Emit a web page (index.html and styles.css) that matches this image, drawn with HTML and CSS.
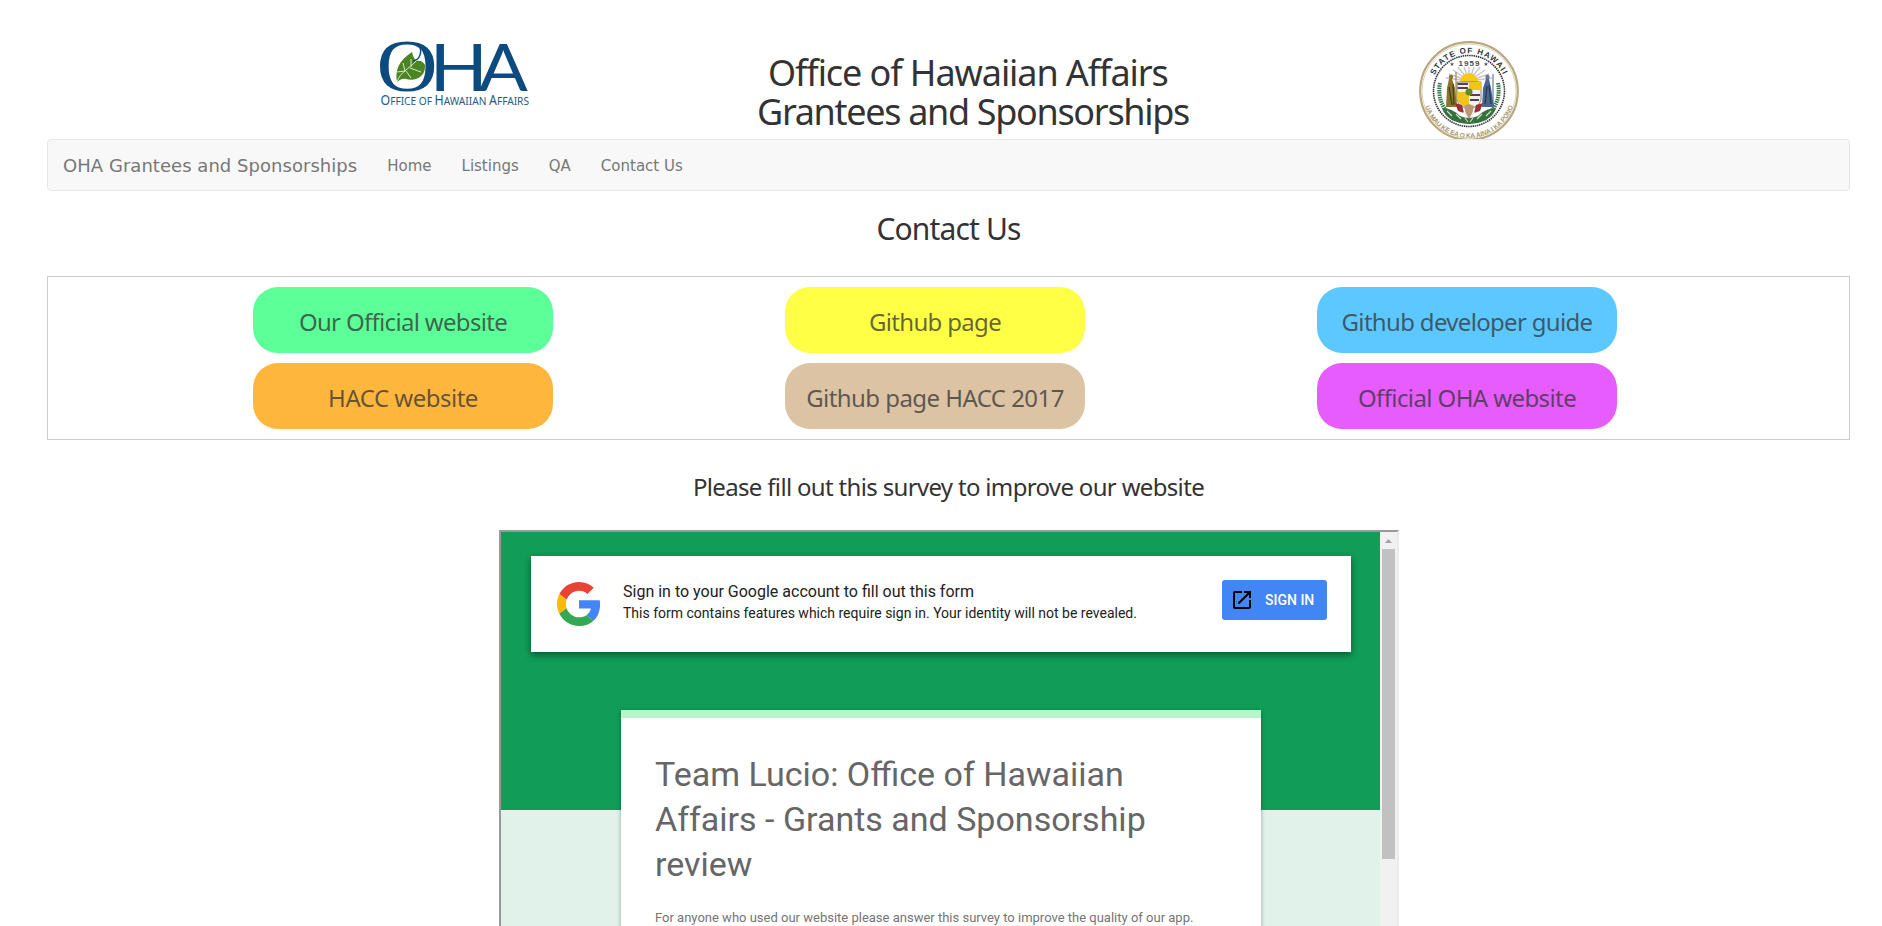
FILE: index.html
```html
<!DOCTYPE html>
<html lang="en">
<head>
<meta charset="utf-8">
<title>Contact Us</title>
<link rel="stylesheet" href="styles.css">
</head>
<body>
<div class="page">
  <header class="masthead">
    <svg class="oha" width="160" height="76" viewBox="375 36 160 76">
      <g fill="#0d4a7f">
        <text class="serif" transform="translate(376.500 91) scale(1.160 1)" font-size="73">O</text>
        <text class="lato" transform="translate(429.500 91.300) scale(1.160 1)" font-size="66">H</text>
        <text class="lato" transform="translate(478.800 91.300) scale(1.100 1)" font-size="66">A</text>
      </g>
      <path d="M397 82C395 71 398 61 412 52C413 56 414 58 416 61C420 60 423 61 425 65C426 76 416 82 406 79C402 78 400 80 397 82Z" fill="#4b8523"/>
      <path d="M413 61C419 60 422 54 420 47" fill="none" stroke="#0d4a7f" stroke-width="1.500"/>
      <path d="M397 82C400 72 409 69 416 61M405 71L403 63M405 71L397 72M410 68L421 72M406 71L411 78M411 67L411 59" fill="none" stroke="#e6efda" stroke-width=".9"/>
      <text class="noto" x="380.500" y="105" fill="#275b8c" textLength="148.500" lengthAdjust="spacingAndGlyphs"><tspan font-size="14">O</tspan><tspan font-size="11.500">FFICE OF </tspan><tspan font-size="14">H</tspan><tspan font-size="11.500">AWAIIAN </tspan><tspan font-size="14">A</tspan><tspan font-size="11.500">FFAIRS</tspan></text>
    </svg>
    <h1 class="title"><span class="t1">Office of Hawaiian Affairs</span><span class="t2">Grantees and Sponsorships</span></h1>
    <svg class="seal" width="102" height="99" viewBox="-51 -51 102 99">
      <defs>
        <path id="arc-top" d="M-37.800 0A37.800 37.800 0 0 1 37.800 0"/>
        <path id="arc-bottom" d="M-46.300 -4A46.500 46.500 0 1 0 46.300 -4"/>
      </defs>
      <circle r="48.800" fill="#fff" stroke="#b9a77d" stroke-width="2.200"/>
      <circle r="47" fill="none" stroke="#ded4b8" stroke-width="1"/>
      <circle r="35.500" fill="none" stroke="#34343c" stroke-width="1.600" stroke-dasharray="1.500 .7"/>
      <text class="seal-top" text-anchor="middle"><textPath href="#arc-top" startOffset="50%">STATE OF HAWAII</textPath></text>
      <text class="seal-bottom" text-anchor="middle"><textPath href="#arc-bottom" startOffset="50%">UA MAU KE EA O KA AINA I KA PONO</textPath></text>
      <text class="seal-year" x="-10.500" y="-25" textLength="21">1959</text>
      <path d="M-17 -29l.6 1.500h1.500l-1.200 1 .5 1.500-1.400-.9-1.400.9.500-1.500-1.200-1h1.500zM17 -29l.6 1.500h1.500l-1.200 1 .5 1.500-1.400-.9-1.400.9.500-1.500-1.200-1h1.500z" fill="#555"/>
      <path d="M0-10L-20-17M0-10L-16-21M0-10L-11-24M0-10L-5-24M0-10L0-24M0-10L5-24M0-10L11-24M0-10L16-21M0-10L20-17M0-10L-23-13M0-10L23-13" stroke="#c4c6d2" stroke-width="1.400"/>
      <path d="M-9-9A9 9 0 0 1 9-9Z" fill="#f7c913"/>
      <path d="M-29-8Q-33 13-15 28M29-8Q33 13 15 28" fill="none" stroke="#397649" stroke-width="4" stroke-dasharray="1.500 .8"/>
      <path d="M-27 17Q-17 17-9 25Q0 29 9 25Q17 17 27 17Q22 32 0 33Q-22 32-27 17Z" fill="#35703f"/>
      <path d="M-22 20l5 5M-13 23l5 5M13 23l-5 5M22 20l-5 5M-4 27l3 4M4 27l-3 4" stroke="#cfddc9" stroke-width="1.200"/>
      <path d="M-12-9H12V9Q10 16 0 18Q-10 16-12 9Z" fill="#f2f0e8" stroke="#666" stroke-width=".8"/>
      <path d="M0-9H12V-1H0ZM-12 1H0V17Q-9 15-12 8Z" fill="#f0c419"/>
      <path d="M-11.500-7H-1M-11.500-3H-1M1 4H11M1 9H10" stroke="#544057" stroke-width="2"/>
      <circle r="3.500" cy="1" fill="#608a23"/>
      <path d="M-20-12h3l3 9 2 19h-11l1-19z" fill="#8a762b"/>
      <path d="M-20-4l3 18M-16-7l1 21" stroke="#4b3d24" stroke-width="1.300"/>
      <path d="M-13-19V16" stroke="#8a762b" stroke-width="1"/>
      <circle cx="-18" cy="-14" r="2.200" fill="#8f7430"/>
      <path d="M17-12h3l2 9 3 19H13l1-19z" fill="#48658e"/>
      <path d="M18-5l-2 18M20-6l2 19" stroke="#29394e" stroke-width="1.300"/>
      <path d="M24-17V14" stroke="#48658e" stroke-width="1"/>
      <circle cx="18.500" cy="-14" r="2.200" fill="#6d7890"/>
      <path d="M-14 12l7 2 2 8-6-2zM14 12l-7 2-2 8 6-2z" fill="#99313a"/>
      <path d="M-5 15L0 13L5 15L3 24L0 28L-3 24Z" fill="#b99979"/>
      <path d="M-5 21l3 5M5 21l-3 5" stroke="#f4ede0" stroke-width="2"/>
    </svg>
  </header>

  <nav class="navbar">
    <a class="brand">OHA Grantees and Sponsorships</a>
    <a class="link">Home</a><a class="link">Listings</a><a class="link">QA</a><a class="link">Contact Us</a>
  </nav>

  <h2 class="heading">Contact Us</h2>

  <section class="links">
    <a class="pill green">Our Official website</a>
    <a class="pill yellow">Github page</a>
    <a class="pill blue">Github developer guide</a>
    <a class="pill orange">HACC website</a>
    <a class="pill tan">Github page HACC 2017</a>
    <a class="pill purple">Official OHA website</a>
  </section>

  <h3 class="survey-heading">Please fill out this survey to improve our website</h3>

  <section class="frame">
    <div class="form-view">
      <div class="signin">
        <svg class="google" width="44" height="44" viewBox="0 0 48 48">
          <path fill="#EA4335" d="M24 9.500c3.540 0 6.710 1.220 9.210 3.600l6.850-6.850C35.900 2.380 30.470 0 24 0 14.620 0 6.510 5.380 2.560 13.220l7.980 6.190C12.430 13.720 17.740 9.500 24 9.500z"/>
          <path fill="#4285F4" d="M46.980 24.550c0-1.570-.15-3.090-.38-4.550H24v9.020h12.940c-.58 2.960-2.260 5.480-4.780 7.180l7.730 6c4.510-4.180 7.090-10.360 7.090-17.650z"/>
          <path fill="#FBBC05" d="M10.530 28.590c-.48-1.450-.76-2.990-.76-4.590s.27-3.140.76-4.590l-7.980-6.190C.92 16.460 0 20.120 0 24c0 3.880.92 7.540 2.560 10.780l7.970-6.190z"/>
          <path fill="#34A853" d="M24 48c6.480 0 11.930-2.130 15.890-5.810l-7.730-6c-2.150 1.450-4.920 2.300-8.160 2.300-6.260 0-11.570-4.220-13.470-9.910l-7.980 6.190C6.510 42.620 14.620 48 24 48z"/>
        </svg>
        <div class="signin-text">
          <p class="lead">Sign in to your Google account to fill out this form</p>
          <p class="sub">This form contains features which require sign in. Your identity will not be revealed.</p>
        </div>
        <a class="signin-btn">
          <svg width="24" height="24" viewBox="0 0 24 24"><path d="M19 19H5V5h7V3H5c-1.110 0-2 .9-2 2v14c0 1.100.89 2 2 2h14c1.100 0 2-.9 2-2v-7h-2v7zM14 3v2h3.590l-9.830 9.830 1.410 1.410L19 6.410V10h2V3h-7z"/></svg>
          SIGN IN
        </a>
      </div>
      <div class="form-card">
        <h4 class="form-title">Team Lucio: Office of Hawaiian Affairs - Grants and Sponsorship review</h4>
        <p class="form-desc">For anyone who used our website please answer this survey to improve the quality of our app.</p>
      </div>
    </div>
    <div class="scrollbar">
      <svg width="17" height="17" viewBox="0 0 17 17"><path d="M5 11h7L8.500 7z" fill="#a3a3a3"/></svg>
      <div class="thumb"></div>
    </div>
  </section>
</div>
</body>
</html>
```
FILE: styles.css
```css
* { box-sizing: border-box; }
html, body { margin: 0; height: 926px; overflow: hidden; background: #fff; }
h1, h2, h3, h4, p { margin: 0; font-weight: 400; }
.page { margin: 0 32px 0 47px; height: 926px; overflow: hidden; font-family: "Noto Sans", sans-serif; color: #333; }

.masthead { display: flex; align-items: flex-start; height: 139px; overflow: hidden; }
.oha { margin: 36px 0 0 328px; flex: none; overflow: visible; }
.serif { font-family: "Liberation Serif", serif; }
.lato { font-family: Lato, sans-serif; }
.noto { font-family: "Noto Sans", sans-serif; }
.title { width: 440px; margin: 53px 0 0 222px; font-size: 36px; line-height: 39px; white-space: nowrap; flex: none; }
.title span { display: block; }
.t1 { margin-left: 11px; letter-spacing: -1.08px; }
.t2 { letter-spacing: -1.32px; }
.seal { margin: 40px 0 0 221px; flex: none; overflow: visible; }
.seal-top { font: bold 8px "Liberation Sans", sans-serif; letter-spacing: 1.15px; fill: #34343c; }
.seal-bottom { font: bold 6.500px "Liberation Sans", sans-serif; letter-spacing: -.1px; fill: #a8956a; }
.seal-year { font: bold 8px "Liberation Sans", sans-serif; fill: #4a4a50; }

.navbar { display: flex; align-items: center; height: 52px; border: 1px solid #e7e7e7; border-radius: 4px; background: #f8f8f8; color: #777; font-family: "DejaVu Sans", sans-serif; padding-left: 15px; }
.brand { font-size: 18px; margin-right: 15px; white-space: nowrap; letter-spacing: .04px; }
.link { font-size: 15px; padding: 1px 15px 0; white-space: nowrap; }

.heading { margin-top: 21px; height: 33px; line-height: 33px; font-size: 30px; text-align: center; letter-spacing: -.85px; }

.links { margin-top: 31px; height: 164px; border: 1px solid #ccc; display: grid; grid-template-columns: repeat(3, 300px); column-gap: 232px; row-gap: 10px; grid-auto-rows: 66px; padding: 10px 0 0 205px; }
.pill { display: flex; align-items: center; justify-content: center; border-radius: 25px; font-size: 24px; color: rgba(51, 51, 51, .75); white-space: nowrap; letter-spacing: -.68px; padding-top: 3px; }
.green { background: #5cff98; }
.yellow { background: #ffff45; }
.blue { background: #5cc8ff; }
.orange { background: #ffb63d; letter-spacing: -.5px; }
.tan { background: #dcc3a3; letter-spacing: -.56px; }
.purple { background: #e65cff; letter-spacing: -.6px; }

.survey-heading { margin-top: 33px; height: 28px; line-height: 27px; font-size: 24px; text-align: center; letter-spacing: -.67px; }

.frame { width: 900px; height: 600px; margin: 29px 0 0 452px; border: 2px solid #ebebeb; border-top-color: #999; border-left-color: #999; display: flex; font-family: Roboto, sans-serif; }
.form-view { flex: 1; height: 596px; padding: 24px 29px 0 30px; background: linear-gradient(#119d58 278px, #e1f2ea 278px); }
.signin { display: flex; height: 96px; background: #fff; padding: 24px 24px 0 26px; box-shadow: 0 3px 6px rgba(0, 0, 0, .3), 0 2px 8px rgba(0, 0, 0, .2); }
.google { margin-top: 2px; flex: none; }
.signin-text { margin-left: 22px; flex: 1; color: #212121; white-space: nowrap; }
.lead { font-size: 16px; line-height: 22px; margin-top: 1px; }
.sub { font-size: 14px; line-height: 20px; }
.signin-btn { display: flex; align-items: center; gap: 11px; width: 105px; height: 40px; padding-left: 8px; border-radius: 3px; background: #4285f4; color: #fff; font-size: 14px; font-weight: 500; white-space: nowrap; }
.form-card { width: 640px; height: 480px; margin: 58px 0 0 90px; border-top: 8px solid #b7f6c8; background: #fff; padding: 34px 34px 0; box-shadow: 0 1px 4px rgba(0, 0, 0, .35); color: #666; }
.form-title { font-size: 34px; line-height: 45px; color: #666; }
.form-desc { margin-top: 21px; font-size: 13px; line-height: 20px; color: #757575; white-space: nowrap; }
.scrollbar { width: 17px; background: #f1f1f1; display: flex; flex-direction: column; align-items: center; }
.thumb { width: 13px; height: 310px; background: #c1c1c1; }
```
